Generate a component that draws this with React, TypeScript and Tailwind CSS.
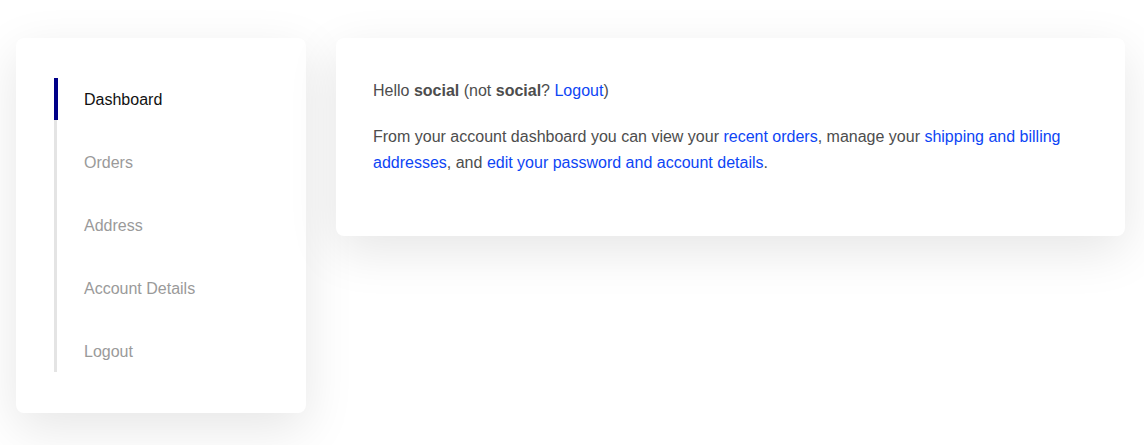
import React from "react";

const navItems = ["Dashboard", "Orders", "Address", "Account Details", "Logout"];

const App: React.FC = () => {
    const active = "Dashboard";

    return (
        <div
            className="min-h-[445px] bg-white pt-[38px] pl-4 pr-[19px]"
            style={{ fontFamily: '"Liberation Sans", Arial, sans-serif' }}
        >
            <div className="flex items-start gap-[30px]">
                {/* Sidebar */}
                <aside className="w-[290px] shrink-0 rounded-lg bg-white px-[38px] pt-10 pb-[41px] shadow-[0_15px_50px_rgba(0,0,0,0.1)]">
                    <ul className="flex flex-col gap-[21px] border-l-[3px] border-[#e4e4e4]">
                        {navItems.map((item) => {
                            const isActive = item === active;
                            return (
                                <li
                                    key={item}
                                    className={`-ml-[3px] flex h-[42px] items-center border-l-[4px] pt-0.5 pl-[26px] text-base ${
                                        isActive
                                            ? "border-[#000088] text-[#111]"
                                            : "border-transparent text-[#9a9a9a]"
                                    }`}
                                >
                                    {item}
                                </li>
                            );
                        })}
                    </ul>
                </aside>

                {/* Content */}
                <main className="flex-1 rounded-lg bg-white px-[37px] pt-10 pb-10 text-base leading-[26px] text-[#4d4d4d] shadow-[0_15px_50px_rgba(0,0,0,0.1)]">
                    <p className="mb-5">
                        Hello <strong className="font-bold">social</strong> (not{" "}
                        <strong className="font-bold">social</strong>?{" "}
                        <a href="#" className="text-[#0d45f5]">
                            Logout
                        </a>
                        )
                    </p>
                    <p className="mb-5 pr-[3px]">
                        From your account dashboard you can view your{" "}
                        <a href="#" className="text-[#0d45f5]">
                            recent orders
                        </a>
                        , manage your{" "}
                        <a href="#" className="text-[#0d45f5]">
                            shipping and billing addresses
                        </a>
                        , and{" "}
                        <a href="#" className="text-[#0d45f5]">
                            edit your password and account details
                        </a>
                        .
                    </p>
                </main>
            </div>
        </div>
    );
};

export default App;
